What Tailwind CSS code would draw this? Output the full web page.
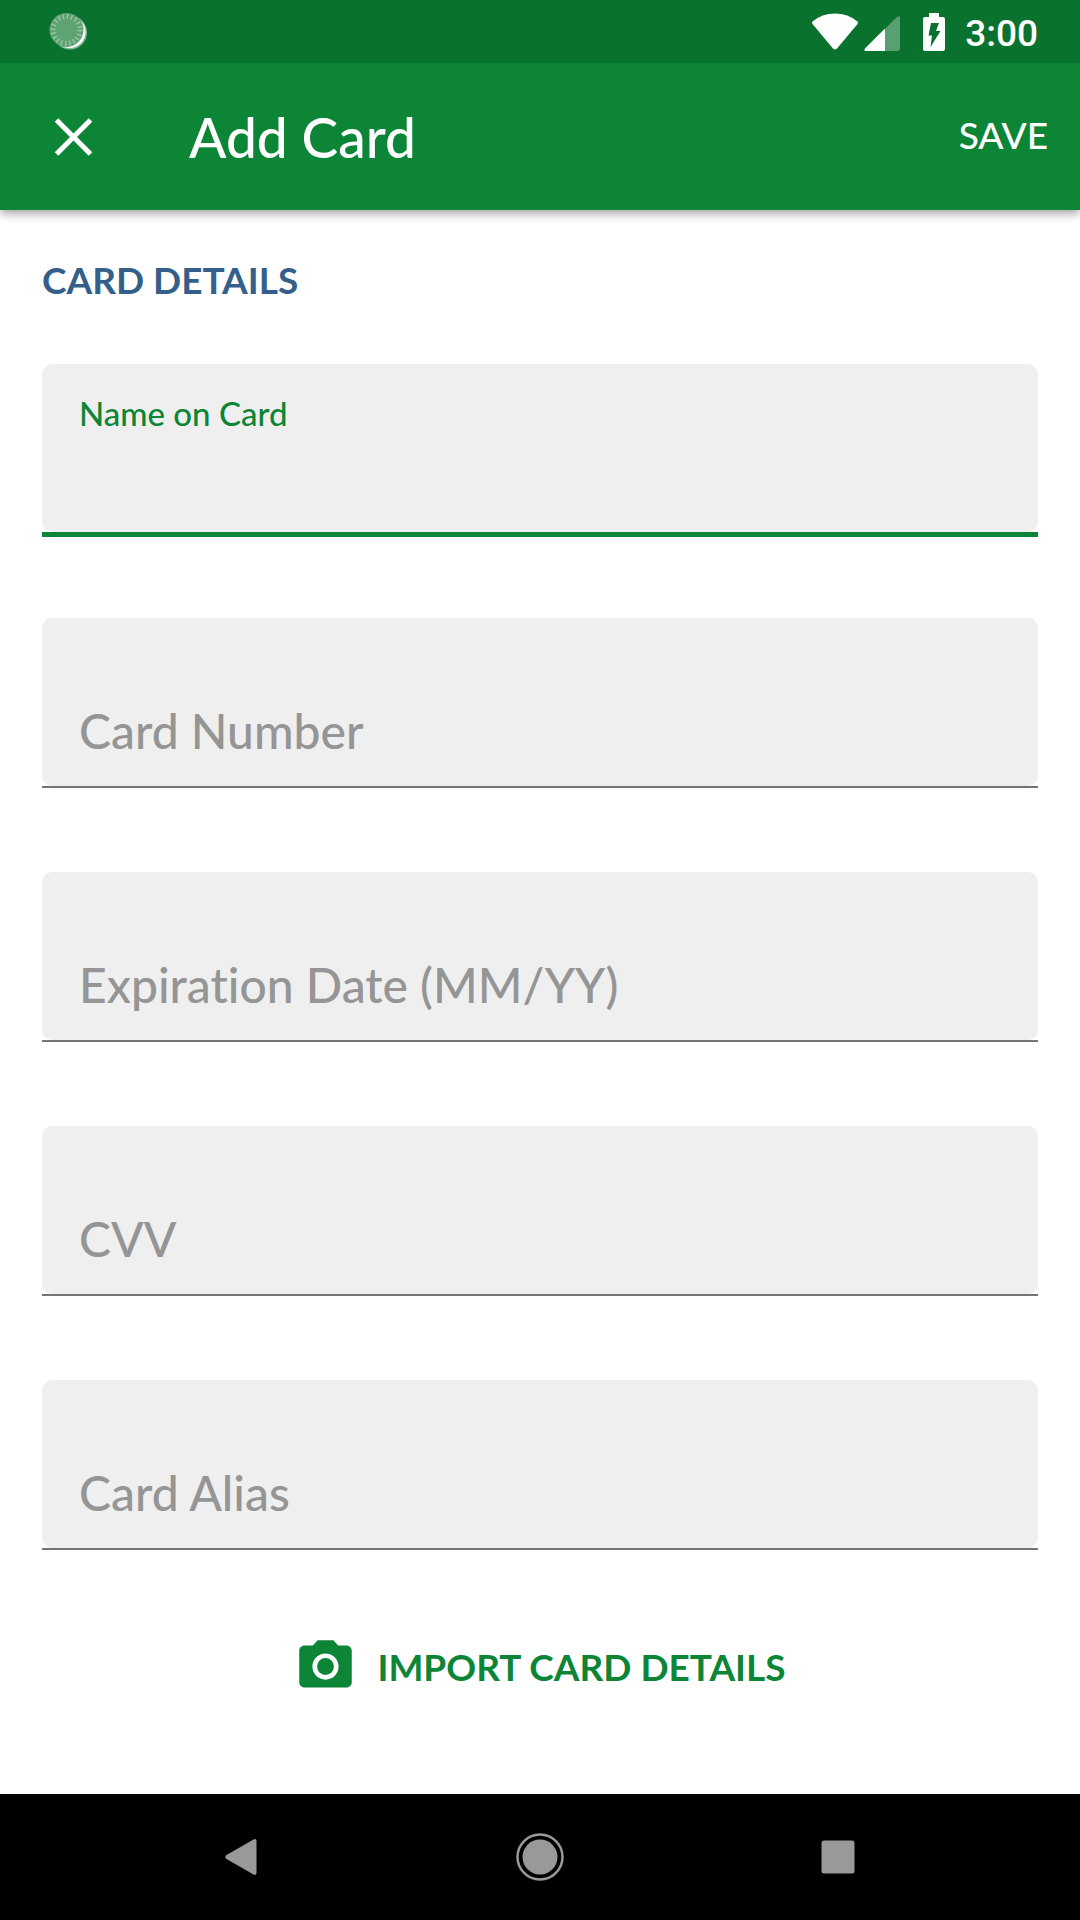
<!DOCTYPE html>
<html lang="en">
<head>
<meta charset="utf-8">
<meta name="viewport" content="width=device-width, initial-scale=1">
<title>Add Card</title>
<script src="https://cdn.jsdelivr.net/npm/@tailwindcss/browser@4"></script>
</head>
<body class="flex min-h-screen flex-col bg-white font-['Lato',sans-serif] font-medium [font-variant-ligatures:none]">

<div class="z-10 flex h-[63px] shrink-0 items-center justify-between bg-[#09722e] pr-[42px] pl-12">
  <svg class="size-10" viewBox="0 0 40 40" aria-hidden="true">
    <circle cx="22" cy="20.500" r="17" fill="#fff" fill-opacity=".5"/>
    <circle cx="21.500" cy="20" r="16" fill="#fff"/>
    <circle cx="18.500" cy="18" r="17" fill="#5fa374"/>
    <circle cx="18.500" cy="18" r="13.500" fill="none" stroke="#9cc7a8" stroke-width="5" stroke-dasharray="1.300 2.941"/>
  </svg>
  <div class="flex items-center">
    <svg class="h-10 w-12" viewBox="0 0 48 40" fill="#fff" aria-hidden="true">
      <path d="M1.500 9.500Q11 1.500 24 1.500T46.500 9.500Q47.500 10.500 46.500 12L26 36.500Q24 38.500 22 36.500L1.500 12Q.5 10.500 1.500 9.500Z"/>
    </svg>
    <svg class="ml-[5px] h-10 w-9" viewBox="0 0 36 40" aria-hidden="true">
      <path d="M1.500 36 33 5Q36 3 36 6V37Q36 39 34 39H2Q-1 39 1.500 36Z" fill="#fff" fill-opacity=".32"/>
      <path d="M1.500 36 21 16.500V39H2Q-1 39 1.500 36Z" fill="#fff"/>
    </svg>
    <svg class="ml-[22px] h-10 w-6" viewBox="0 0 24 40" aria-hidden="true">
      <path d="M7 1H17V5H21Q23 5 23 7V37Q23 39 21 39H3Q1 39 1 37V7Q1 5 3 5H7Z" fill="#fff"/>
      <path d="M9 11H17L14 19H18.500L8.500 35 10 23.500H6.500Z" fill="#09722e"/>
    </svg>
    <span class="ml-[19px] pt-1 font-['Roboto',sans-serif] text-[37px] leading-10 font-medium text-white">3:00</span>
  </div>
</div>

<header class="flex h-[147px] shrink-0 items-center bg-[#0c8536] pr-8 pl-[42px] text-white shadow-[0_3px_10px_rgba(0,0,0,0.4)]">
  <button type="button" aria-label="Close" class="size-16">
    <svg class="size-16" viewBox="0 0 64 64" fill="none" stroke="#fff" stroke-width="5" aria-hidden="true">
      <path d="M14.500 15 48.500 49M48.500 15 14.500 49"/>
    </svg>
  </button>
  <h1 class="ml-[83px] grow text-[55px] leading-16">Add Card</h1>
  <button type="button" class="pb-1 text-[37px] leading-12">SAVE</button>
</header>

<main class="grow px-[42px] pt-[46px]">
  <form>
    <h2 class="text-[37px] leading-12 font-bold text-[#345f8a]">CARD DETAILS</h2>
    <div class="mt-[60px] flex flex-col gap-[81px]">
      <label class="flex h-[173px] flex-col text-[#0c8536]">
        <span class="grid">
          <input type="text" class="h-42 rounded-[10px] bg-[#efefef] px-[38px] pt-12 text-[48px] outline-none [grid-area:1/1]">
          <span class="z-10 mt-[29px] ml-[37px] text-[33px] leading-10 [grid-area:1/1]">Name on Card</span>
        </span>
        <span class="h-[5px] bg-[#0c8536]"></span>
      </label>
      <label class="flex h-[173px] flex-col text-[#959595]">
        <span class="grid">
          <input type="text" class="h-42 rounded-[10px] bg-[#efefef] px-[38px] pt-12 text-[48px] outline-none [grid-area:1/1]">
          <span class="z-10 mt-[83px] ml-[37px] text-[48px] leading-[60px] [grid-area:1/1]">Card Number</span>
        </span>
        <span class="h-[2px] bg-[#747474]"></span>
      </label>
      <label class="flex h-[173px] flex-col text-[#959595]">
        <span class="grid">
          <input type="text" class="h-42 rounded-[10px] bg-[#efefef] px-[38px] pt-12 text-[48px] outline-none [grid-area:1/1]">
          <span class="z-10 mt-[83px] ml-[37px] text-[48px] leading-[60px] [grid-area:1/1]">Expiration Date (MM/YY)</span>
        </span>
        <span class="h-[2px] bg-[#747474]"></span>
      </label>
      <label class="flex h-[173px] flex-col text-[#959595]">
        <span class="grid">
          <input type="text" class="h-42 rounded-[10px] bg-[#efefef] px-[38px] pt-12 text-[48px] outline-none [grid-area:1/1]">
          <span class="z-10 mt-[83px] ml-[37px] text-[48px] leading-[60px] [grid-area:1/1]">CVV</span>
        </span>
        <span class="h-[2px] bg-[#747474]"></span>
      </label>
      <label class="flex h-[173px] flex-col text-[#959595]">
        <span class="grid">
          <input type="text" class="h-42 rounded-[10px] bg-[#efefef] px-[38px] pt-12 text-[48px] outline-none [grid-area:1/1]">
          <span class="z-10 mt-[83px] ml-[37px] text-[48px] leading-[60px] [grid-area:1/1]">Card Alias</span>
        </span>
        <span class="h-[2px] bg-[#747474]"></span>
      </label>
    </div>
    <button type="button" class="mx-auto mt-20 flex items-center gap-5 text-[37px] leading-16 font-bold text-[#0c8536]">
      <svg class="size-[63px]" viewBox="0 0 24 24" fill="currentColor" aria-hidden="true">
        <circle cx="12" cy="12" r="3.200"/>
        <path d="M9 2 7.170 4H4c-1.100 0-2 .9-2 2v12c0 1.100.9 2 2 2h16c1.100 0 2-.9 2-2V6c0-1.100-.9-2-2-2h-3.170L15 2H9zm3 15c-2.760 0-5-2.240-5-5s2.240-5 5-5 5 2.240 5 5-2.240 5-5 5z"/>
      </svg>
      <span class="pt-[2px]">IMPORT CARD DETAILS</span>
    </button>
  </form>
</main>

<nav class="grid h-[126px] shrink-0 grid-cols-[1fr_298px_298px_298px_1fr] items-center bg-black" aria-label="System">
  <button type="button" aria-label="Back" class="col-start-2 flex justify-center">
    <svg class="size-12" viewBox="0 0 48 48" fill="#999" aria-hidden="true"><path d="M35.500 6.500Q38.500 5 38.500 8V39.500Q38.500 43 35.500 41.500L8.500 26Q6 24 8.500 22Z"/></svg>
  </button>
  <button type="button" aria-label="Home" class="flex justify-center">
    <svg class="size-12" viewBox="0 0 48 48" fill="#999" aria-hidden="true"><circle cx="24" cy="24" r="17.500"/><circle cx="24" cy="24" r="22.500" fill="none" stroke="#999" stroke-width="2.500"/></svg>
  </button>
  <button type="button" aria-label="Recent apps" class="flex justify-center">
    <svg class="size-12" viewBox="0 0 48 48" fill="#999" aria-hidden="true"><rect x="7.500" y="7.500" width="33" height="33" rx="2.500"/></svg>
  </button>
</nav>
</body>
</html>
